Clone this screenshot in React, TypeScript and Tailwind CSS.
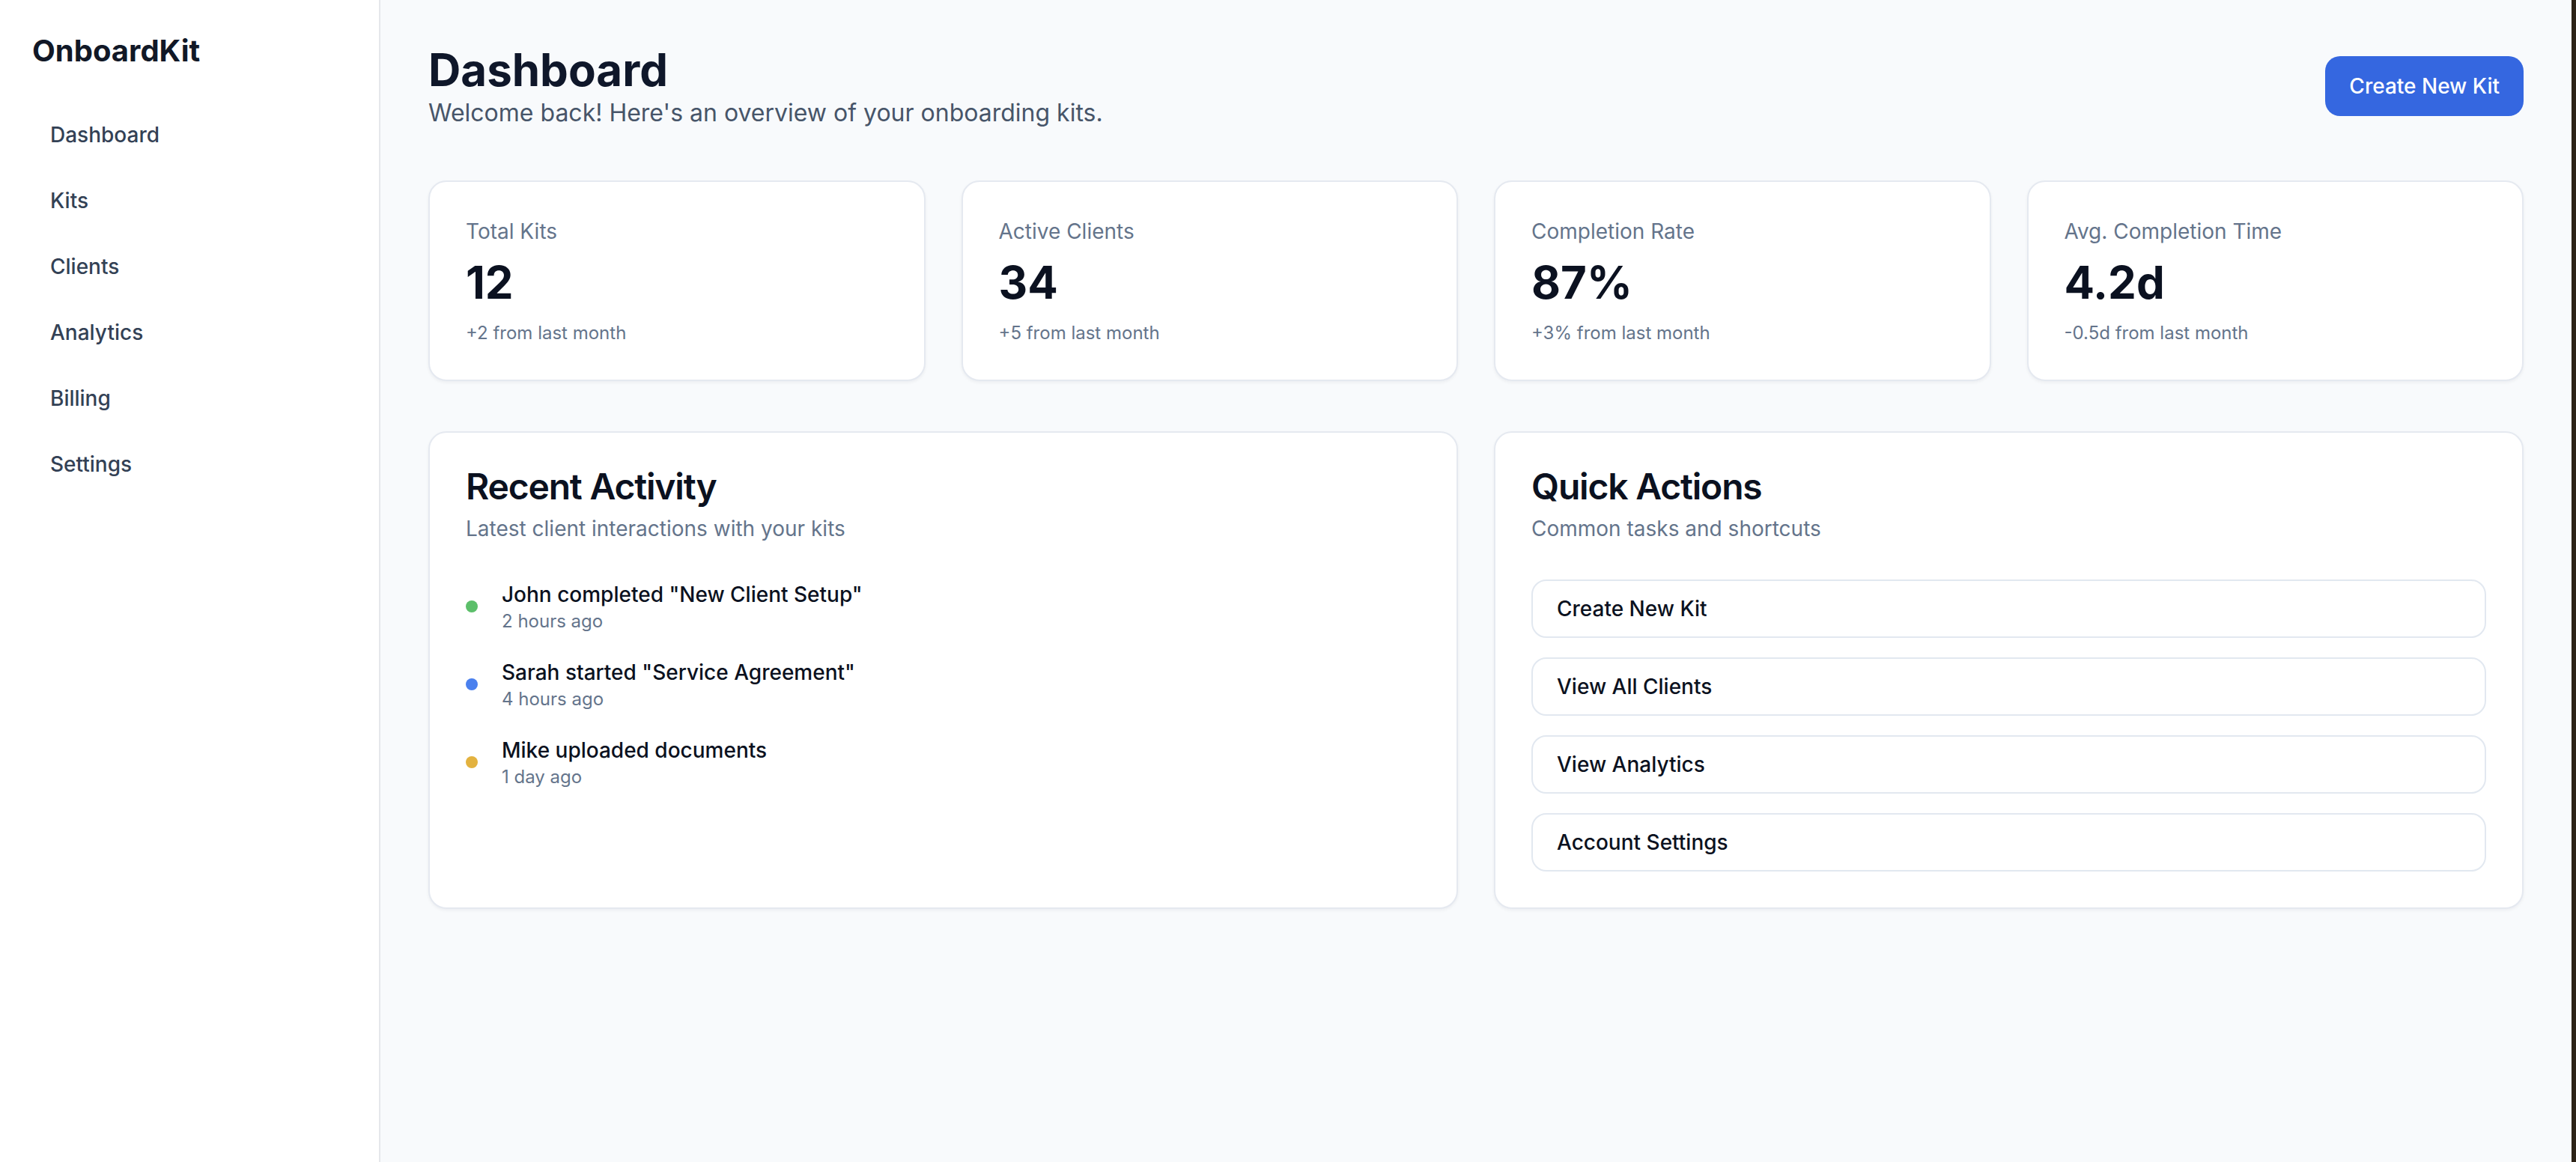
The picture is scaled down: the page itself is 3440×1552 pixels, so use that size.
import React from 'react';

const navItems = ['Dashboard', 'Kits', 'Clients', 'Analytics', 'Billing', 'Settings'];

const stats = [
  { label: 'Total Kits', value: '12', change: '+2 from last month' },
  { label: 'Active Clients', value: '34', change: '+5 from last month' },
  { label: 'Completion Rate', value: '87%', change: '+3% from last month' },
  { label: 'Avg. Completion Time', value: '4.2d', change: '-0.5d from last month' },
];

const activity = [
  { text: 'John completed "New Client Setup"', time: '2 hours ago', dot: 'bg-[#5cbf6a]' },
  { text: 'Sarah started "Service Agreement"', time: '4 hours ago', dot: 'bg-[#4a80ee]' },
  { text: 'Mike uploaded documents', time: '1 day ago', dot: 'bg-[#e3b23f]' },
];

const quickActions = ['Create New Kit', 'View All Clients', 'View Analytics', 'Account Settings'];

const Sidebar: React.FC = () => (
  <aside className="w-[508px] shrink-0 bg-white border-r-2 border-[#e5e7eb] pl-[43px] pr-[40px] pt-[40px]">
    <div className="text-[40px] leading-[56px] font-bold text-[#111827]">OnboardKit</div>
    <nav className="mt-[48px] flex flex-col gap-[16px]">
      {navItems.map((item) => (
        <a
          key={item}
          href="#"
          className="px-[24px] py-[16px] rounded-[12px] text-[28px] leading-[40px] font-medium text-[#334155] hover:bg-gray-100"
        >
          {item}
        </a>
      ))}
    </nav>
  </aside>
);

const StatCard: React.FC<{ label: string; value: string; change: string }> = ({ label, value, change }) => (
  <div className="bg-white border-2 border-[#e5e9f0] rounded-[24px] shadow-[0_2px_4px_rgba(15,23,42,0.05)] px-[48px] py-[46px]">
    <div className="text-[28px] leading-[40px] text-[#64748b]">{label}</div>
    <div className="mt-[12px] text-[60px] leading-[72px] font-bold text-[#0b1120]">{value}</div>
    <div className="mt-[16px] text-[24px] leading-[32px] text-[#64748b]">{change}</div>
  </div>
);

const Panel: React.FC<{ title: string; description: string; children: React.ReactNode }> = ({
  title,
  description,
  children,
}) => (
  <div className="bg-white border-2 border-[#e5e9f0] rounded-[24px] shadow-[0_2px_4px_rgba(15,23,42,0.05)]">
    <div className="p-[48px]">
      <h3 className="text-[48px] leading-none font-semibold tracking-tight text-[#0b1120]">{title}</h3>
      <p className="mt-[12px] text-[28px] leading-[40px] text-[#64748b]">{description}</p>
    </div>
    <div className="px-[48px] pb-[48px]">{children}</div>
  </div>
);

export default function App() {
  return (
    <div className="flex h-screen w-full bg-[#f8fafc] font-['Inter',sans-serif] antialiased">
      <Sidebar />

      <main className="flex-1 px-[64px] pt-[57px]">
        <div className="flex items-center justify-between">
          <div>
            <h1 className="text-[60px] leading-[72px] font-bold text-[#0f172a]">Dashboard</h1>
            <p className="text-[32px] leading-[44px] text-[#475569]">
              Welcome back! Here's an overview of your onboarding kits.
            </p>
          </div>
          <button className="h-[80px] px-[32px] rounded-[20px] bg-[#3567e0] text-white text-[28px] font-medium">
            Create New Kit
          </button>
        </div>

        <div className="mt-[68px] grid grid-cols-4 gap-[48px]">
          {stats.map((s) => (
            <StatCard key={s.label} {...s} />
          ))}
        </div>

        <div className="mt-[67px] grid grid-cols-2 gap-[48px]">
          <Panel title="Recent Activity" description="Latest client interactions with your kits">
            <div className="flex flex-col gap-[32px]">
              {activity.map((a) => (
                <div key={a.text} className="flex items-center gap-[32px]">
                  <span className={`w-[16px] h-[16px] rounded-full shrink-0 ${a.dot}`} />
                  <div>
                    <div className="text-[28px] leading-[40px] font-medium text-[#0b1120]">{a.text}</div>
                    <div className="text-[24px] leading-[32px] text-[#64748b]">{a.time}</div>
                  </div>
                </div>
              ))}
            </div>
          </Panel>

          <Panel title="Quick Actions" description="Common tasks and shortcuts">
            <div className="flex flex-col gap-[26px]">
              {quickActions.map((q) => (
                <button
                  key={q}
                  className="h-[78px] w-full bg-white border-2 border-[#e2e8f0] rounded-[20px] px-[32px] text-left text-[28px] font-medium text-[#0b1120] hover:bg-gray-50"
                >
                  {q}
                </button>
              ))}
            </div>
          </Panel>
        </div>
      </main>

      <div className="w-[6px] shrink-0 bg-[#2d2317]" />
    </div>
  );
}
